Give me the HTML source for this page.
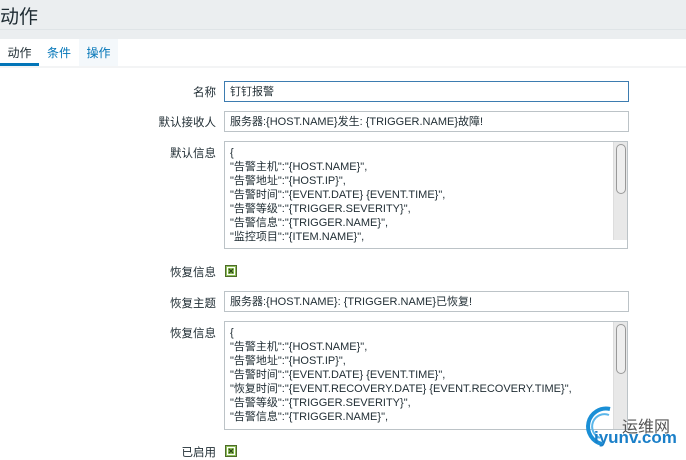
<!DOCTYPE html>
<html><head><meta charset="utf-8"><style>
body{margin:0;width:686px;height:455px;overflow:hidden;background:#fff;font-family:"Liberation Sans","Noto Sans CJK SC",sans-serif;font-size:11px;color:#1f2c33;position:relative}
.hdr{position:absolute;left:0;top:0;width:686px;height:29px;background:#ebeef0;border-bottom:1px solid #dfe4e7}
.hdr span{position:absolute;left:0;top:2px;font-size:19px;color:#1f2c33}
.strip{position:absolute;left:0;top:30px;width:686px;height:9px;background:#ebeef0}
.tabs{position:absolute;left:0;top:39px;width:686px;height:27px;border-bottom:2px solid #f3f4f5;font-size:12px}
.tab{position:absolute;top:0;height:27px;line-height:29px;text-align:center;color:#0275b8}
.lbl{position:absolute;right:470px;text-align:right;color:#1f2c33;font-size:11.5px}
.in{position:absolute;left:224px;width:398px;height:19px;border:1px solid #bcc3c7;line-height:20px;padding-left:5px;white-space:nowrap}
.ta{position:absolute;left:224px;width:404px;border:1px solid #bcc3c7;padding:4px 0 0 5px;box-sizing:border-box;line-height:14px;overflow:hidden;white-space:nowrap}
.sb{position:absolute;right:0;top:0;width:13px;bottom:8px;background:#e8e8e8;border-left:1px solid #ddd}
.th{position:absolute;left:2px;top:2px;width:8px;height:48px;border:1px solid #999;border-radius:5px;background:#eee}
.cb{position:absolute;left:225px;width:10px;height:10px;border:1px solid #4d6b2a;background:#8fbf5a;box-sizing:content-box}
</style></head><body>
<div class="hdr"><span>动作</span></div>
<div class="strip"></div>
<div class="tabs">
<div class="tab" style="left:0;width:39px;color:#1f2c33;border-bottom:3px solid #0275b8;height:24px">动作</div>
<div class="tab" style="left:39px;width:40px">条件</div>
<div class="tab" style="left:79px;width:39px;background:#f4f8fb">操作</div>
</div>
<div class="lbl" style="top:84px">名称</div>
<div class="in" style="top:81px;border-color:#3d7cb0">钉钉报警</div>
<div class="lbl" style="top:114px">默认接收人</div>
<div class="in" style="top:111px">服务器:{HOST.NAME}发生: {TRIGGER.NAME}故障!</div>
<div class="lbl" style="top:145px">默认信息</div>
<div class="ta" style="top:141px;height:108px">{<br>"告警主机":"{HOST.NAME}",<br>"告警地址":"{HOST.IP}",<br>"告警时间":"{EVENT.DATE} {EVENT.TIME}",<br>"告警等级":"{TRIGGER.SEVERITY}",<br>"告警信息":"{TRIGGER.NAME}",<br>"监控项目":"{ITEM.NAME}",<div class="sb"><div class="th"></div></div></div>
<div class="lbl" style="top:264px">恢复信息</div>
<div class="cb" style="top:265px"><svg width="10" height="10" style="position:absolute;left:0;top:0"><rect x="1.5" y="1.5" width="7" height="7" fill="none" stroke="#fff" stroke-width="1"/><path d="M3 3L7 7M7 3L3 7" stroke="#2c4a14" stroke-width="1.3"/></svg></div>
<div class="lbl" style="top:295px">恢复主题</div>
<div class="in" style="top:291px">服务器:{HOST.NAME}: {TRIGGER.NAME}已恢复!</div>
<div class="lbl" style="top:325px">恢复信息</div>
<div class="ta" style="top:321px;height:109px">{<br>"告警主机":"{HOST.NAME}",<br>"告警地址":"{HOST.IP}",<br>"告警时间":"{EVENT.DATE} {EVENT.TIME}",<br>"恢复时间":"{EVENT.RECOVERY.DATE} {EVENT.RECOVERY.TIME}",<br>"告警等级":"{TRIGGER.SEVERITY}",<br>"告警信息":"{TRIGGER.NAME}",<div class="sb" style="bottom:0"><div class="th"></div></div></div>
<div class="lbl" style="top:444px">已启用</div>
<div class="cb" style="top:445px"><svg width="10" height="10" style="position:absolute;left:0;top:0"><rect x="1.5" y="1.5" width="7" height="7" fill="none" stroke="#fff" stroke-width="1"/><path d="M3 3L7 7M7 3L3 7" stroke="#2c4a14" stroke-width="1.3"/></svg></div>
<svg style="position:absolute;left:582px;top:404px" width="36" height="44"><path d="M28 5 A17 17 0 1 0 20 40" fill="none" stroke="#1a8fd6" stroke-width="4"/><path d="M27 11 A11 11 0 1 0 18 34" fill="none" stroke="#5bb6ea" stroke-width="2"/></svg>
<div style="position:absolute;left:622px;top:413px;font-size:16px;color:#555">运维网</div>
<div style="position:absolute;left:594px;top:428px;font-size:17px;color:#1a7fc8;font-weight:bold">iyunv.com</div>
</body></html>
